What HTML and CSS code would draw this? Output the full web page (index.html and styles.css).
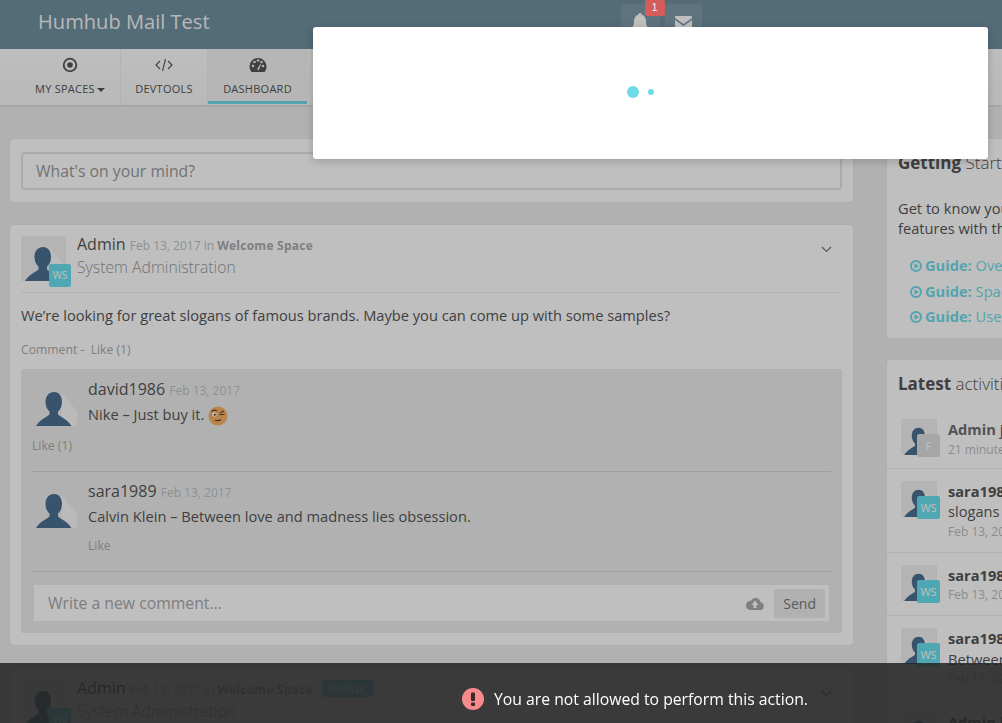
FILE: index.html
```html
<!doctype html>
<html>

<head>
    <title>Humhub Mail Test</title>
    <link rel="stylesheet" href="styles.css">
</head>

<body>
    <svg class="defs" width="0" height="0">
        <symbol id="person" viewBox="0 0 45 45">
            <path fill="#fff" fill-opacity="0.65" d="M29 12 L45 30 L45 45 L30 45 Z"/>
            <path fill="#4a7090" d="M22 11c5 0 8 4 8 10 0 4-1.500 7.500-4 9.500v3c2 2 9 4.500 13.500 11.500H4c4.500-7 11.500-9.500 13.500-11.500v-3c-2.500-2-4-5.500-4-9.500 0-6 3.500-10 8.500-10z"/>
        </symbol>
        <symbol id="playcircle" viewBox="0 0 12 12">
            <circle cx="6" cy="6" r="5" fill="none" stroke="#6fdbe8" stroke-width="2"/>
            <path fill="#6fdbe8" d="M4.500 3.200 9 6 4.500 8.800z"/>
        </symbol>
    </svg>

    <div id="topbar">
        <div class="brand">Humhub Mail Test</div>
        <div class="notifications">
            <div class="notify-btn bell">
                <svg width="18" height="20" viewBox="0 0 18 20"><path fill="#fff" d="M9 0c1 0 1.500.7 1.500 1.500C13.500 2.300 15 5 15 8c0 4 1 6 3 8H0c2-2 3-4 3-8 0-3 1.500-5.700 4.500-6.500C7.500.7 8 0 9 0z"/></svg>
                <span class="count">1</span>
            </div>
            <div class="notify-btn mail">
                <svg width="17" height="14" viewBox="0 0 17 14"><path fill="#fff" d="M1 0h15a1 1 0 0 1 1 1v1L8.500 8 0 2V1a1 1 0 0 1 1-1zM0 4l8.500 6L17 4v9a1 1 0 0 1-1 1H1a1 1 0 0 1-1-1z"/></svg>
            </div>
        </div>
    </div>

    <div id="topmenu">
        <div class="menu-item first">
            <svg width="16" height="16" viewBox="0 0 16 16"><circle cx="8" cy="8" r="6.300" fill="none" stroke="#555" stroke-width="1.800"/><circle cx="8" cy="8" r="2.800" fill="#555"/></svg>
            <span>MY SPACES <i class="caret"></i></span>
        </div>
        <div class="menu-item second">
            <svg width="18" height="16" viewBox="0 0 18 16"><path fill="none" stroke="#555" stroke-width="1.100" d="M5 4 1 8l4 4M13 4l4 4-4 4M10.500 2 7.500 14"/></svg>
            <span>DEVTOOLS</span>
        </div>
        <div class="menu-item active">
            <svg width="18" height="16" viewBox="0 0 18 16"><path fill="#555" d="M9 1a8.500 8.500 0 0 1 8.500 8.500c0 2-.7 3.900-1.900 5.500H2.400A8.600 8.600 0 0 1 .5 9.500 8.500 8.500 0 0 1 9 1z"/><g fill="#eee"><circle cx="4" cy="9" r="1.300"/><circle cx="5.500" cy="5" r="1.300"/><circle cx="9" cy="3.500" r="1.300"/><circle cx="12.500" cy="5" r="1.300"/><circle cx="14" cy="9" r="1.300"/><path d="M8 12.500 11.500 6.500l.6.300L10 13z"/></g></svg>
            <span>DASHBOARD</span>
        </div>
    </div>

    <div id="innhold">
        <div id="stream">
            <div class="panel form-panel">
                <div class="mind-input">What's on your mind?</div>
            </div>

            <div class="panel post">
                <div class="post-head">
                    <div class="avatar">
                        <svg width="45" height="45"><use href="#person"/></svg>
                        <span class="space-badge">WS</span>
                    </div>
                    <div class="post-meta">
                        <div class="line-one">Admin <small>Feb 13, 2017 in <b>Welcome Space</b></small></div>
                        <div class="line-two">System Administration</div>
                    </div>
                    <svg class="chevron" width="11" height="7" viewBox="0 0 11 7"><path fill="none" stroke="#777" stroke-width="1.200" d="M1 1l4.500 4.500L10 1"/></svg>
                </div>
                <p class="post-text">We’re looking for great slogans of famous brands. Maybe you can come up with some samples?</p>
                <div class="actions">Comment - &nbsp;Like (1)</div>

                <div class="comments">
                    <div class="comment first-comment">
                        <div class="comment-row">
                            <svg class="comment-pic" width="45" height="45"><use href="#person"/></svg>
                            <div>
                                <div class="line-one">david1986 <small>Feb 13, 2017</small></div>
                                <div class="comment-text">Nike – Just buy it.
                                    <svg class="emoji" width="20" height="20" viewBox="0 0 20 20">
                                        <circle cx="10" cy="10" r="9.500" fill="#f4b366"/>
                                        <circle cx="6.500" cy="8.500" r="2.200" fill="#fff"/>
                                        <circle cx="6.800" cy="8.700" r="1" fill="#4a3020"/>
                                        <path fill="none" stroke="#6b4020" stroke-width="1.200" d="M3.500 5.500Q6 3 9 5M11.500 8.500h5M12 7l4-2"/>
                                        <path fill="none" stroke="#6b4020" stroke-width="1.200" d="M7 14q3 1.500 6-.5"/>
                                    </svg>
                                </div>
                            </div>
                        </div>
                        <div class="actions">Like (1)</div>
                    </div>
                    <div class="comment second-comment">
                        <div class="comment-row">
                            <svg class="comment-pic" width="45" height="45"><use href="#person"/></svg>
                            <div>
                                <div class="line-one">sara1989 <small>Feb 13, 2017</small></div>
                                <div class="comment-text">Calvin Klein – Between love and madness lies obsession.</div>
                                <div class="actions">Like</div>
                            </div>
                        </div>
                    </div>
                    <div class="comment-input">
                        <span class="placeholder">Write a new comment...</span>
                        <svg width="18" height="13" viewBox="0 0 18 13"><path fill="#aaa" d="M14.500 5.300A5 5 0 0 0 5 3.800 4.400 4.400 0 0 0 4 13h10.500a3.900 3.900 0 0 0 0-7.700zM10.500 8v3h-3V8H5.500L9 3.500 12.500 8z"/></svg>
                        <span class="send">Send</span>
                    </div>
                </div>
            </div>

            <div class="panel post">
                <div class="post-head">
                    <div class="avatar">
                        <svg width="45" height="45"><use href="#person"/></svg>
                        <span class="space-badge">WS</span>
                    </div>
                    <div class="post-meta">
                        <div class="line-one">Admin <small>Feb 13, 2017 in <b>Welcome Space</b></small> <span class="public">PUBLIC</span></div>
                        <div class="line-two">System Administration</div>
                    </div>
                    <svg class="chevron" width="11" height="7" viewBox="0 0 11 7"><path fill="none" stroke="#777" stroke-width="1.200" d="M1 1l4.500 4.500L10 1"/></svg>
                </div>
            </div>
        </div>

        <div id="sidebar">
            <div class="panel getting-started">
                <h2><b>Getting</b> Started</h2>
                <p>Get to know your way around the site's<br>features with the following guides:</p>
                <ul class="guides">
                    <li><svg class="play" width="12" height="12"><use href="#playcircle"/></svg><b>Guide:</b> Overview</li>
                    <li><svg class="play" width="12" height="12"><use href="#playcircle"/></svg><b>Guide:</b> Spaces</li>
                    <li><svg class="play" width="12" height="12"><use href="#playcircle"/></svg><b>Guide:</b> User profile</li>
                </ul>
            </div>

            <div class="panel activities">
                <h2><b>Latest</b> activities</h2>
                <div class="activity act-first">
                    <div class="activity-pic">
                        <svg width="36" height="36"><use href="#person"/></svg>
                        <span class="mini-badge grey">F</span>
                    </div>
                    <div><b>Admin</b> joined the space Fun<small>21 minutes ago</small></div>
                </div>
                <div class="activity">
                    <div class="activity-pic">
                        <svg width="36" height="36"><use href="#person"/></svg>
                        <span class="mini-badge">WS</span>
                    </div>
                    <div><b>sara1989</b> commented post "Great<br>slogans of famous brands"<small>Feb 13, 2017</small></div>
                </div>
                <div class="activity">
                    <div class="activity-pic">
                        <svg width="36" height="36"><use href="#person"/></svg>
                        <span class="mini-badge">WS</span>
                    </div>
                    <div><b>sara1989</b> likes comment<small>Feb 13, 2017</small></div>
                </div>
                <div class="activity">
                    <div class="activity-pic">
                        <svg width="36" height="36"><use href="#person"/></svg>
                        <span class="mini-badge">WS</span>
                    </div>
                    <div><b>sara1989</b> commented post<br>Between love and madness<small>Feb 13, 2017</small></div>
                </div>
                <div class="activity">
                    <div class="activity-pic">
                        <svg width="36" height="36"><use href="#person"/></svg>
                    </div>
                    <div><b>Admin</b> likes comment</div>
                </div>
            </div>
        </div>
    </div>

    <div id="backdrop"></div>

    <div id="modal">
        <span class="dot big"></span>
        <span class="dot small"></span>
    </div>

    <div id="statusbar">
        <svg width="22" height="22" viewBox="0 0 22 22"><circle cx="11" cy="11" r="11" fill="#f88a8d"/><rect x="9" y="4.500" width="4" height="8.500" rx="1" fill="#3a2a2a"/><rect x="9" y="14.500" width="4" height="3.500" rx="1" fill="#3a2a2a"/></svg>
        <span>You are not allowed to perform this action.</span>
    </div>
</body>

</html>
```

FILE: styles.css
```css
html,
body {
    height: 100%;
    overflow: hidden;
}

body {
    margin: 0;
    background-color: #ededed;
    color: #555;
    font-family: "Open Sans", sans-serif;
    font-size: 14px;
}

.defs {
    display: block;
    height: 0;
}

small {
    font-size: 12px;
}

/* Topbar */

#topbar {
    display: flex;
    height: 49px;
    background-color: #708fa0;
    color: #fff;
}

.brand {
    margin: 8px 0 0 38px;
    font-size: 20.100px;
    line-height: 28px;
    color: #f4f4f4;
}

.notifications {
    display: flex;
    gap: 5px;
    margin: 4px 0 0 411px;
}

.notify-btn {
    position: relative;
    display: flex;
    justify-content: center;
    height: 40px;
    box-sizing: border-box;
    border-radius: 3px;
    background-color: #7f9aaa;
}

.notify-btn.bell {
    width: 39px;
    padding-top: 9px;
}

.notify-btn.mail {
    width: 37px;
    padding-top: 12px;
}

.count {
    position: absolute;
    z-index: 5;
    top: -4px;
    right: -5px;
    width: 20px;
    height: 16px;
    border-radius: 2px;
    background-color: #d65c5c;
    color: #eee;
    font-size: 11px;
    line-height: 15px;
    text-align: center;
    font-family: "Liberation Sans", sans-serif;
}

/* Meny */

#topmenu {
    display: flex;
    height: 56px;
    background-color: #fff;
    box-shadow: 0 1px 2px rgba(0, 0, 0, 0.1);
    background-image: linear-gradient(#fdfdfd, #f7f7f7);
}

.menu-item {
    display: flex;
    flex-direction: column;
    align-items: center;
    box-sizing: border-box;
    padding-top: 8px;
    border-right: 1px solid #eee;
    color: #555;
    font-size: 11px;
    letter-spacing: 0.25px;
}

.menu-item span {
    margin-top: 8px;
    line-height: 15px;
}

.menu-item.first {
    width: 121px;
    padding-left: 20px;
}

.menu-item.second {
    width: 87px;
}

.menu-item.active {
    width: 99px;
    border-right: none;
    border-bottom: 3px solid #6fdbe8;
    height: 55px;
    background-color: #f3f3f3;
}

.caret {
    display: inline-block;
    border-top: 4px solid #555;
    border-left: 4px solid transparent;
    border-right: 4px solid transparent;
    vertical-align: middle;
    margin-left: -1px;
}

/* Innhold */

#innhold {
    display: flex;
    gap: 34px;
    width: 1200px;
    padding: 34px 0 0 10px;
}

#stream {
    width: 843px;
    flex-shrink: 0;
}

#sidebar {
    width: 290px;
    flex-shrink: 0;
}

.panel {
    box-sizing: border-box;
    border-radius: 4px;
    background-color: #fff;
    margin-bottom: 22px;
    box-shadow: 0 0 2px rgba(0, 0, 0, 0.08);
}

.form-panel {
    padding: 13px 11px 12px;
    margin-bottom: 23px;
}

.mind-input {
    box-sizing: border-box;
    height: 38px;
    padding: 0 13px;
    border: 2px solid #e4e4e4;
    border-radius: 4px;
    color: #999;
    font-size: 15.750px;
    line-height: 34px;
}

.post {
    padding: 11px 11px 12px;
    margin-bottom: 24px;
}

.post-head {
    position: relative;
    display: flex;
    gap: 11px;
    padding-bottom: 11px;
    border-bottom: 1px solid #eee;
}

.avatar {
    position: relative;
    width: 45px;
    height: 45px;
    background-color: #f0f0f0;
}

.avatar svg {
    display: block;
}

.space-badge {
    position: absolute;
    left: 28px;
    top: 28px;
    width: 22px;
    height: 23px;
    border-radius: 2px;
    background-color: #67e0ef;
    color: #fff;
    font-size: 10px;
    line-height: 23px;
    text-align: center;
}

.line-one {
    font-size: 16px;
    line-height: 17px;
    color: #555;
}

.line-one small {
    color: #bac2c7;
}

.line-one small b {
    color: #aaa;
    letter-spacing: 0.25px;
}

.line-two {
    margin-top: 2px;
    color: #999;
    font-size: 15.750px;
    font-weight: 300;
    line-height: 22px;
}

.public {
    display: inline-block;
    margin-left: 5px;
    padding: 0 6px;
    border-radius: 2px;
    background-color: #6fdbe8;
    color: #fff;
    font-size: 11px;
    font-weight: 600;
    line-height: 17px;
    vertical-align: 1px;
}

.chevron {
    position: absolute;
    right: 10px;
    top: 10px;
}

.post-text {
    margin: 12px 0 16px;
    color: #555;
    font-size: 14.650px;
    line-height: 20px;
}

.actions {
    color: #aaa;
    font-size: 12.200px;
    line-height: 17px;
}

.comments {
    margin-top: 11px;
    padding: 0 11px 12px;
    border-radius: 2px;
    background-color: #ededed;
}

.comment {
    border-bottom: 1px solid #d5d5d5;
}

.first-comment {
    height: 103px;
    padding-top: 12px;
    box-sizing: border-box;
}

.first-comment .actions {
    margin-top: 11px;
}

.second-comment {
    height: 100px;
    padding-top: 11px;
    box-sizing: border-box;
}

.second-comment .actions {
    margin-top: 11px;
}

.comment-row {
    display: flex;
    gap: 11px;
}

.comment-pic {
    flex-shrink: 0;
}

.comment-text {
    margin-top: 5px;
    font-size: 14.650px;
    line-height: 20px;
}

.emoji {
    vertical-align: -6px;
}

.comment-input {
    display: flex;
    align-items: center;
    margin: 13px 2px 0;
    height: 36px;
    padding: 0 4px 0 14px;
    background-color: #fff;
}

.placeholder {
    flex: 1;
    color: #a8a8a8;
    font-size: 15.750px;
}

.send {
    margin-left: 10px;
    padding: 0 9px;
    background-color: #ededed;
    color: #7a7a7a;
    font-size: 14px;
    line-height: 29px;
    border-radius: 2px;
}

/* Sidebar */

#sidebar h2 {
    margin: 0;
    font-size: 17px;
    font-weight: 300;
    color: #555;
    line-height: 24px;
}

#sidebar h2 b {
    font-weight: 700;
}

.getting-started {
    height: 199px;
    padding: 12px 11px;
}

.getting-started p {
    margin: 23px 0 0;
    font-size: 14.650px;
    line-height: 20px;
}

.guides {
    margin: 17px 0 0;
    padding: 0 0 0 12px;
    list-style: none;
    color: #6fdbe8;
    font-size: 14.650px;
}

.guides li {
    height: 25.500px;
    line-height: 20px;
}

.play {
    margin-right: 3px;
    vertical-align: -1px;
}

.activities {
    padding-top: 12px;
    height: 500px;
}

.activities h2 {
    padding: 0 11px 13px;
}

.activity {
    display: flex;
    gap: 11px;
    padding: 12px 14px 9.500px;
    border-bottom: 1px solid #eee;
    font-size: 14.650px;
    line-height: 20.500px;
    white-space: nowrap;
}

.act-first {
    padding-top: 10px;
    padding-bottom: 7.500px;
}

.act-first b {
    color: #6f6f6f;
}

.activity small {
    display: block;
    color: #bbb;
    font-size: 12px;
}

.activity-pic {
    position: relative;
    width: 36px;
    height: 36px;
    flex-shrink: 0;
    background-color: #f0f0f0;
}

.activity-pic svg {
    display: block;
}

.mini-badge {
    position: absolute;
    left: 16px;
    top: 15px;
    width: 23px;
    height: 23px;
    border-radius: 2px;
    background-color: #67e0ef;
    color: #fff;
    font-size: 11px;
    line-height: 23px;
    text-align: center;
}

.mini-badge.grey {
    background-color: #dedede;
}

/* Modal og statuslinje */

#backdrop {
    position: fixed;
    top: 0;
    left: 0;
    right: 0;
    bottom: 0;
    background-color: rgba(0, 0, 0, 0.25);
}

#modal {
    position: fixed;
    left: 313px;
    top: 27px;
    width: 675px;
    height: 132px;
    border-radius: 3px;
    background-color: #fff;
    box-shadow: 0 2px 10px rgba(0, 0, 0, 0.2);
}

.dot {
    position: absolute;
    border-radius: 50%;
    background-color: #6fdbe8;
}

.dot.big {
    left: 314px;
    top: 59px;
    width: 12px;
    height: 12px;
}

.dot.small {
    left: 335px;
    top: 62px;
    width: 6px;
    height: 6px;
}

#statusbar {
    position: fixed;
    left: 0;
    right: 0;
    bottom: 0;
    box-sizing: border-box;
    height: 60px;
    display: flex;
    align-items: center;
    gap: 10px;
    padding: 12px 0 0 462px;
    background-color: rgba(36, 36, 36, 0.86);
    color: #fff;
    font-size: 15.750px;
}
```
